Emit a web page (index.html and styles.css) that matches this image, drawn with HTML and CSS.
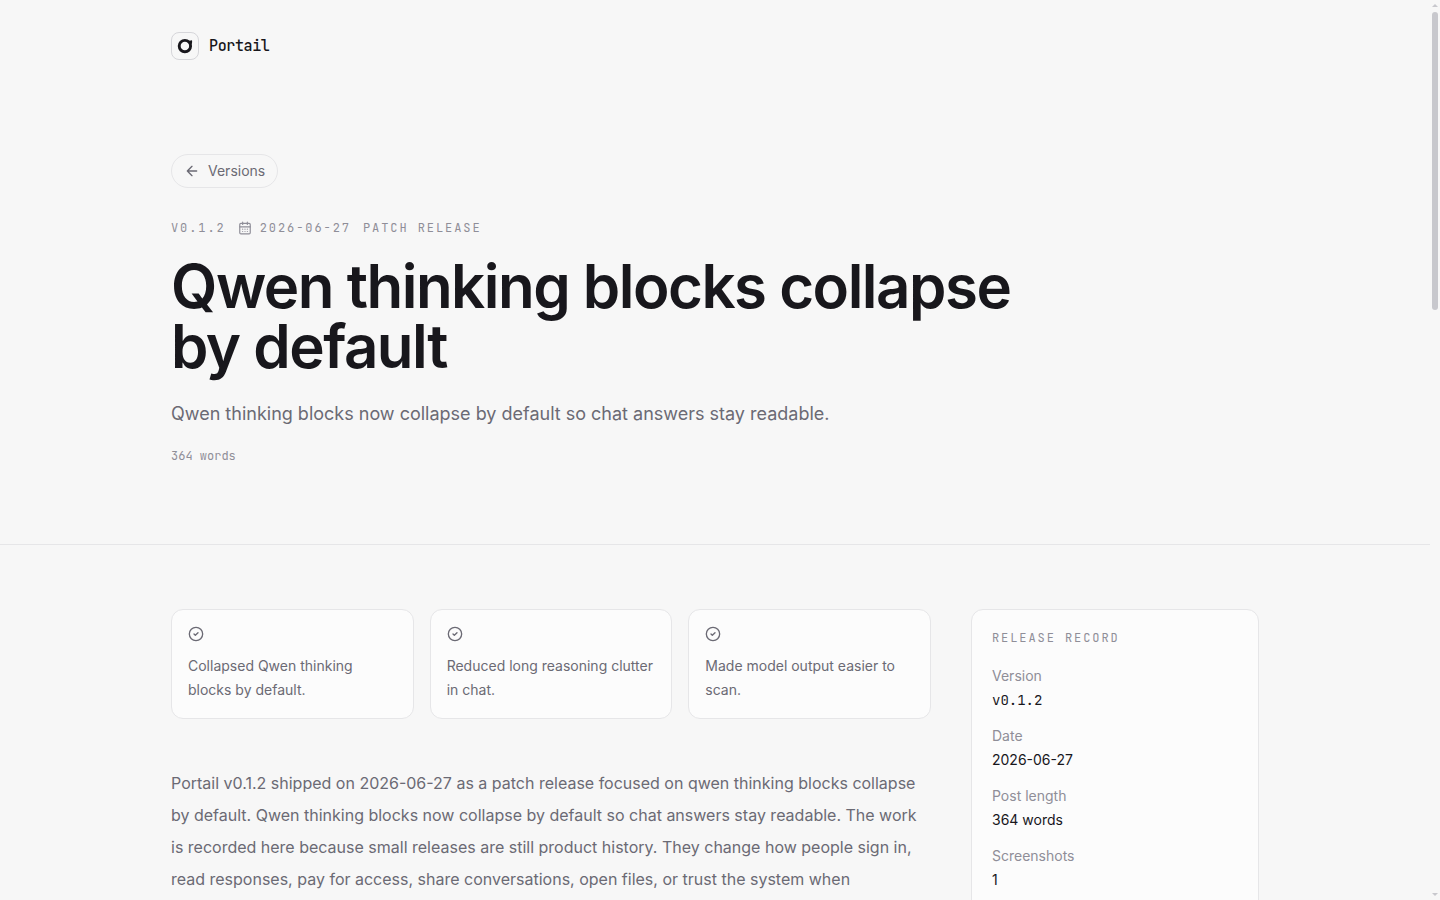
FILE: index.html
```
<!DOCTYPE html>
<html lang="en">
<head>
  <meta charset="UTF-8">
  <meta name="viewport" content="width=device-width, initial-scale=1">
  <title>Qwen thinking blocks collapse by default - Portail</title>
  <link rel="stylesheet" href="styles.css">
</head>
<body>
<div class="page">
  <header class="hero">
    <div class="container">
      <a class="brand" href="#">
        <span class="brand-mark">
          <svg width="16" height="16" viewBox="0 0 16 16" fill="none" stroke="currentColor">
            <circle cx="7.9" cy="8.1" r="5.7" stroke-width="2.9"/>
            <path d="M10.600 2.400c1.400.6 2.800.5 4.400-.1.300 1.700.1 3.200-.7 4.700z" fill="currentColor" stroke="none"/>
          </svg>
        </span>
        <span class="brand-name">Portail</span>
      </a>

      <a class="back" href="#">
        <svg class="icon" width="16" height="16" viewBox="0 0 24 24"><path d="m12 19-7-7 7-7M19 12H5"/></svg>
        Versions
      </a>

      <div class="meta label">
        <span>v0.1.2</span>
        <span class="meta-date">
          <svg class="icon" width="14" height="14" viewBox="0 0 24 24"><path d="M8 2v4M16 2v4M3 10h18M8 14h.01M12 14h.01M16 14h.01M8 18h.01M12 18h.01M16 18h.01"/><rect x="3" y="4" width="18" height="18" rx="2"/></svg>
          <time datetime="2026-06-27">2026-06-27</time>
        </span>
        <span>Patch release</span>
      </div>

      <h1>Qwen thinking blocks collapse by default</h1>
      <p class="summary">Qwen thinking blocks now collapse by default so chat answers stay readable.</p>
      <p class="words">364 words</p>
    </div>
  </header>

  <main class="container content">
    <article>
      <ul class="highlights">
        <li>
          <svg class="icon" width="16" height="16" viewBox="0 0 24 24"><circle cx="12" cy="12" r="10"/><path d="m9 12 2 2 4-4"/></svg>
          <p>Collapsed Qwen thinking blocks by default.</p>
        </li>
        <li>
          <svg class="icon" width="16" height="16" viewBox="0 0 24 24"><circle cx="12" cy="12" r="10"/><path d="m9 12 2 2 4-4"/></svg>
          <p>Reduced long reasoning clutter in chat.</p>
        </li>
        <li>
          <svg class="icon" width="16" height="16" viewBox="0 0 24 24"><circle cx="12" cy="12" r="10"/><path d="m9 12 2 2 4-4"/></svg>
          <p>Made model output easier to scan.</p>
        </li>
      </ul>
      <p class="body-text">Portail v0.1.2 shipped on 2026-06-27 as a patch release focused on qwen thinking blocks collapse by default. Qwen thinking blocks now collapse by default so chat answers stay readable. The work is recorded here because small releases are still product history. They change how people sign in, read responses, pay for access, share conversations, open files, or trust the system when</p>
    </article>

    <aside class="record">
      <h2 class="label">Release record</h2>
      <dl>
        <div><dt>Version</dt><dd class="mono">v0.1.2</dd></div>
        <div><dt>Date</dt><dd>2026-06-27</dd></div>
        <div><dt>Post length</dt><dd>364 words</dd></div>
        <div><dt>Screenshots</dt><dd>1</dd></div>
      </dl>
    </aside>
  </main>
</div>

<div class="scrollbar" aria-hidden="true">
  <svg width="6" height="3" viewBox="0 0 6 3"><path d="M3 0 6 3H0z"/></svg>
  <div class="track"><div class="thumb"></div></div>
  <svg width="6" height="3" viewBox="0 0 6 3"><path d="M0 0h6L3 3z"/></svg>
</div>
</body>
</html>
```
FILE: styles.css
```
:root {
  --bg: #f7f7f7;
  --card: #fcfcfc;
  --line: #e6e6e8;
  --ink: #18171c;
  --muted: #6b6a74;
  --faint: #8f8e98;
  --sans: Inter, "Liberation Sans", sans-serif;
  --mono: "JetBrains Mono", "Liberation Mono", monospace;
}

* { box-sizing: border-box; margin: 0; padding: 0; }

body {
  display: flex;
  height: 100vh;
  overflow: hidden;
  background: var(--bg);
  color: var(--ink);
  font: 14px/24px var(--sans);
}

a { color: inherit; text-decoration: none; }
ul { list-style: none; }

.page {
  flex: 1;
  min-width: 0;
  overflow-y: auto;
  scrollbar-width: none;
}

.container {
  max-width: 1136px;
  margin: 0 auto;
  padding: 0 24px;
}

.icon {
  flex: none;
  display: block;
  fill: none;
  stroke: currentColor;
  stroke-width: 2;
  stroke-linecap: round;
  stroke-linejoin: round;
}

.mono { font-family: var(--mono); }

.label {
  font: 400 12px/16px var(--mono);
  letter-spacing: 0.16em;
  text-transform: uppercase;
  color: var(--faint);
}

/* hero */
.hero {
  padding: 32px 0 80px;
  border-bottom: 1px solid var(--line);
}

.brand {
  display: flex;
  align-items: center;
  gap: 10px;
  width: fit-content;
}

.brand-mark {
  display: grid;
  place-items: center;
  width: 28px;
  height: 28px;
  border: 1px solid #d6d6da;
  border-radius: 8px;
}

.brand-name {
  font: 500 15px/24px var(--mono);
  letter-spacing: -0.025em;
}

.back {
  display: flex;
  align-items: center;
  gap: 8px;
  width: fit-content;
  height: 34px;
  margin-top: 94px;
  padding: 0 12px;
  border: 1px solid var(--line);
  border-radius: 17px;
  color: var(--muted);
}

.meta {
  display: flex;
  align-items: center;
  gap: 12px;
  margin-top: 32px;
}

.meta-date {
  display: flex;
  align-items: center;
  gap: 8px;
}

h1 {
  max-width: 896px;
  margin-top: 20px;
  font-size: 60px;
  font-weight: 600;
  line-height: 60px;
  letter-spacing: -0.025em;
}

.summary {
  margin-top: 22px;
  font-size: 18px;
  line-height: 32px;
  color: var(--muted);
}

.words {
  margin-top: 18px;
  font: 12px/16px var(--mono);
  color: var(--faint);
}

/* content */
.content {
  display: grid;
  grid-template-columns: minmax(0, 1fr) 288px;
  gap: 40px;
  padding-top: 64px;
}

.highlights {
  display: grid;
  grid-template-columns: repeat(3, 1fr);
  gap: 16px;
}

.highlights li {
  padding: 16px;
  border: 1px solid var(--line);
  border-radius: 12px;
  background: var(--card);
  color: var(--muted);
}

.highlights p { margin-top: 12px; }

.body-text {
  margin-top: 48px;
  padding-bottom: 64px;
  font-size: 16px;
  line-height: 32px;
  color: var(--muted);
}

.record {
  padding: 20px;
  border: 1px solid var(--line);
  border-radius: 12px;
  background: var(--card);
}

.record dl {
  display: grid;
  gap: 12px;
  margin-top: 18px;
}

.record dt { color: var(--faint); }

/* scrollbar */
.scrollbar {
  display: flex;
  flex-direction: column;
  align-items: center;
  gap: 5px;
  width: 10px;
  padding: 4px 0;
  fill: #c8c8cd;
}

.track {
  flex: 1;
  width: 6px;
}

.thumb {
  height: 34%;
  border-radius: 3px;
  background: #c8c8cd;
}
```
